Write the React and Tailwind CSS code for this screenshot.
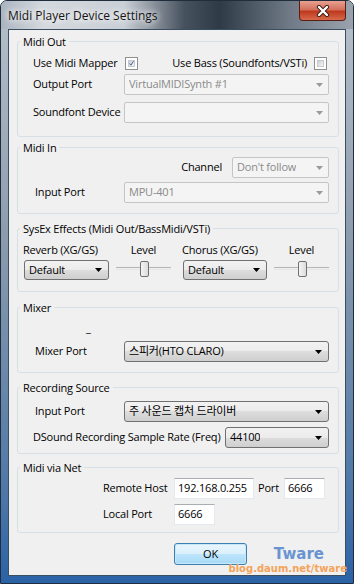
import React from 'react';

const ui = "font-['Open_Sans','Noto_Sans_CJK_KR',sans-serif] text-[11px] tracking-[-0.2px] whitespace-nowrap text-black";

function Arrow({ disabled }) {
  return (
    <svg width="7" height="4" viewBox="0 0 7 4" className="shrink-0">
      <polygon points="0,0 7,0 3.5,4" fill={disabled ? '#9a9a9a' : '#000'} />
    </svg>
  );
}

function Combo({ text, w, disabled, className = '' }) {
  if (disabled) {
    return (
      <div className={`h-[21px] ${w} flex items-center justify-between pl-[4px] pr-[5px] border border-[#c5c5c5] rounded-[2px] bg-[#f4f4f4] text-[#8a8a8a] ${className}`}>
        <span className="truncate">{text}</span>
        <Arrow disabled />
      </div>
    );
  }
  return (
    <div className={`h-[21px] ${w} flex items-center justify-between pl-[4px] pr-[6px] border border-[#707070] rounded-[3px] bg-[linear-gradient(#f2f2f2,#ebebeb_50%,#dddddd_50%,#cfcfcf)] ${className}`}>
      <span className="truncate">{text}</span>
      <Arrow />
    </div>
  );
}

function Check({ checked }) {
  return (
    <div className="w-[13px] h-[13px] border border-[#8e8f8f] bg-white p-[2px] shrink-0">
      <div className="w-full h-full bg-[linear-gradient(135deg,#cbcfd5,#f6f6f6)] border border-[#c6c9ce] flex items-center justify-center">
        {checked && (
          <svg width="9" height="9" viewBox="0 0 9 9">
            <path d="M1 4.5 L3.5 7.5 L8 0.5" stroke="#4a5f97" strokeWidth="1.8" fill="none" />
          </svg>
        )}
      </div>
    </div>
  );
}

function Slider({ w }) {
  return (
    <div className={`relative h-[20px] ${w}`}>
      <div className="absolute left-0 right-0 top-[7px] h-[3px] border-t border-[#b4b4b4] border-b border-b-[#e6e6e6]" />
      <div className="absolute left-[24px] top-[1px] w-[9px] h-[16px] border border-[#707070] rounded-[2px] bg-[linear-gradient(90deg,#f4f4f4,#dcdcdc)]" />
    </div>
  );
}

function Input({ value, w }) {
  return (
    <div className={`h-[21px] ${w} flex items-center pl-[3px] bg-white border border-[#e3e9ef] border-t-[#abadb3]`}>
      {value}
    </div>
  );
}

function Group({ title, h, mt, children }) {
  return (
    <fieldset className={`ml-[8px] w-[322px] ${h} ${mt} border border-[#d5dfe5] rounded-[3px]`}>
      <legend className="ml-[2px] px-[3px] leading-[13px]">{title}</legend>
      {children}
    </fieldset>
  );
}

export default function App() {
  return (
    <div className={`${ui} w-[354px] h-[584px] flex flex-col rounded-t-[7px] border border-[#1f2d3c] bg-[linear-gradient(#b7c1cb,#8d9cad_40%,#4d77a8_85%,#2a62a6)] overflow-hidden relative`}>
      <div className="h-[28px] flex items-start justify-between bg-[linear-gradient(90deg,#aab4bf_0%,#d4d9de_12%,#c9cfd6_35%,#47525f_52%,#2f3a47_62%,#707a87_82%,#9aa3ad_100%)]">
        <span className="mt-[6px] ml-[7px] text-[12px] tracking-normal text-[#151515] [text-shadow:0_0_6px_#fff,0_0_10px_#fff]">Midi Player Device Settings</span>
        <div className="mr-[7px] w-[47px] h-[20px] rounded-b-[4px] border border-t-0 border-[#5a1d14] bg-[linear-gradient(#e8a192,#d4705c_45%,#c0391f_55%,#d66a4c)] flex items-center justify-center">
          <svg width="14" height="12" viewBox="0 0 14 12">
            <path d="M3 2 L11 10 M11 2 L3 10" stroke="#3b1a14" strokeWidth="4.2" strokeLinecap="round" />
            <path d="M3 2 L11 10 M11 2 L3 10" stroke="#fff" strokeWidth="2.4" strokeLinecap="round" />
          </svg>
        </div>
      </div>

      <div className="ml-[7px] w-[338px] h-[547px] border border-[#3b4d61] bg-[#f0f0f0] flex flex-col">
        <Group title="Midi Out" h="h-[102px]" mt="mt-[5px]">
          <div className="flex flex-col pt-[5px] pl-[15px] pr-[9px]">
            <div className="h-[21px] flex items-center">
              <span className="w-[92px]">Use Midi Mapper</span>
              <Check checked />
              <span className="ml-auto">Use Bass (Soundfonts/VSTi)</span>
              <div className="ml-[7px] mr-[2px]"><Check /></div>
            </div>
            <div className="h-[21px] flex items-center">
              <span className="w-[91px]">Output Port</span>
              <Combo text="VirtualMIDISynth #1" w="w-[205px]" disabled />
            </div>
            <div className="mt-[7px] h-[21px] flex items-center">
              <span className="w-[91px]">Soundfont Device</span>
              <Combo text="" w="w-[205px]" disabled />
            </div>
          </div>
        </Group>

        <Group title="Midi In" h="h-[73px]" mt="mt-[4px]">
          <div className="flex flex-col pt-[3px] pl-[15px] pr-[9px]">
            <div className="h-[21px] flex items-center justify-end">
              <span>Channel</span>
              <Combo text="Don't follow" w="w-[97px]" className="ml-[10px]" disabled />
            </div>
            <div className="mt-[4px] h-[21px] flex items-center">
              <span className="ml-[2px] w-[89px]">Input Port</span>
              <Combo text="MPU-401" w="w-[205px]" disabled />
            </div>
          </div>
        </Group>

        <Group title="SysEx Effects (Midi Out/BassMidi/VSTi)" h="h-[70px]" mt="mt-[8px]">
          <div className="flex pt-[8px] pl-[5px]">
            <div className="flex">
              <div className="w-[86px] flex flex-col">
                <span className="h-[14px] leading-[14px]">Reverb (XG/GS)</span>
                <Combo text="Default" w="w-[85px]" className="mt-[3px] ml-[1px] !h-[20px]" />
              </div>
              <div className="ml-[7px] w-[55px] flex flex-col items-center">
                <span className="h-[14px] leading-[14px]">Level</span>
                <div className="mt-[3px]"><Slider w="w-[55px]" /></div>
              </div>
            </div>
            <div className="ml-[11px] flex">
              <div className="w-[86px] flex flex-col">
                <span className="h-[14px] leading-[14px]">Chorus (XG/GS)</span>
                <Combo text="Default" w="w-[84px]" className="mt-[3px] ml-[1px] !h-[20px]" />
              </div>
              <div className="ml-[6px] w-[55px] flex flex-col items-center">
                <span className="h-[14px] leading-[14px]">Level</span>
                <div className="mt-[3px]"><Slider w="w-[55px]" /></div>
              </div>
            </div>
          </div>
        </Group>

        <Group title="Mixer" h="h-[72px]" mt="mt-[9px]">
          <div className="flex flex-col pt-[7px] pl-[15px] pr-[9px]">
            <span className="h-[14px] leading-[14px] ml-[53px]">_</span>
            <div className="mt-[6px] h-[21px] flex items-center">
              <span className="ml-[2px] w-[89px]">Mixer Port</span>
              <Combo text="스피커(HTO CLARO)" w="w-[205px]" />
            </div>
          </div>
        </Group>

        <Group title="Recording Source" h="h-[73px]" mt="mt-[8px]">
          <div className="flex flex-col pt-[7px] pl-[15px] pr-[9px]">
            <div className="h-[21px] flex items-center">
              <span className="ml-[2px] w-[89px]">Input Port</span>
              <Combo text="주 사운드 캡처 드라이버" w="w-[205px]" />
            </div>
            <div className="mt-[5px] h-[21px] flex items-center justify-between">
              <span>DSound Recording Sample Rate (Freq)</span>
              <Combo text="44100" w="w-[104px]" />
            </div>
          </div>
        </Group>

        <Group title="Midi via Net" h="h-[72px]" mt="mt-[7px]">
          <div className="flex flex-col pt-[4px] pl-[85px]">
            <div className="h-[21px] flex items-center">
              <span className="w-[71px]">Remote Host</span>
              <Input value="192.168.0.255" w="w-[80px]" />
              <span className="ml-[4px] w-[26px]">Port</span>
              <Input value="6666" w="w-[41px]" />
            </div>
            <div className="mt-[5px] h-[21px] flex items-center">
              <span className="w-[71px]">Local Port</span>
              <Input value="6666" w="w-[41px]" />
            </div>
          </div>
        </Group>

        <div className="mt-[10px] ml-[165px] w-[73px] h-[22px] rounded-[3px] border border-[#3c7fb1] bg-[linear-gradient(#eaf6fd,#d9f0fc_50%,#bee6fd_50%,#a7d9f5)] shadow-[inset_0_0_0_1px_#c6e8f9] flex items-center justify-center">
          OK
        </div>
      </div>

      <div className="absolute right-[29px] bottom-[21px] font-['DejaVu_Sans',sans-serif] font-bold tracking-normal text-[15px] leading-[15px] text-[#6a94d0]">Tware</div>
      <div className="absolute right-[6px] bottom-[9px] font-['DejaVu_Sans',sans-serif] font-bold tracking-normal text-[10px] leading-[11px] text-[#f4a35a]">blog.daum.net/tware</div>
    </div>
  );
}
